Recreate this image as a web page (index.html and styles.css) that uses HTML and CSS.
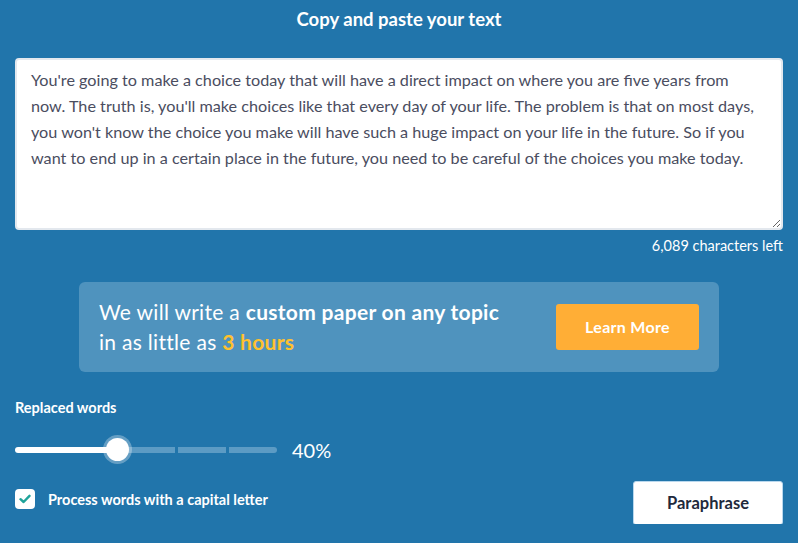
FILE: index.html
```html
<!DOCTYPE html>
<html lang="en">

<head>
    <meta charset="UTF-8">
    <title>Paraphrasing tool</title>
    <link rel="stylesheet" href="styles.css">
</head>

<body>
    <div id="tool">
        <h2 class="title">Copy and paste your text</h2>
        <textarea class="input">You're going to make a choice today that will have a direct impact on where you are five years from
now. The truth is, you'll make choices like that every day of your life. The problem is that on most days,
you won't know the choice you make will have such a huge impact on your life in the future. So if you
want to end up in a certain place in the future, you need to be careful of the choices you make today.</textarea>
        <div class="counter">6,089 characters left</div>

        <div class="promo">
            <p class="promo_text">We will write a <b>custom paper on any topic</b><br>in as little as <b class="accent">3 hours</b></p>
            <a class="promo_btn">Learn More</a>
        </div>

        <div class="options">
            <div class="opt_left">
                <div class="label">Replaced words</div>
                <div class="slider_row">
                    <div class="slider">
                        <span class="fill"></span>
                        <span class="knob"></span>
                        <span class="seg seg1"></span>
                        <span class="seg"></span>
                        <span class="seg"></span>
                    </div>
                    <span class="percent">40%</span>
                </div>
                <label class="check">
                    <span class="box">
                        <svg width="12" height="10" viewBox="0 0 12 10"><path d="M1.5 5.2 L4.6 8 L10.5 1.8" fill="none" stroke="#1fa39a" stroke-width="2.4" stroke-linecap="round" stroke-linejoin="round"/></svg>
                    </span>
                    Process words with a capital letter
                </label>
            </div>
            <a class="go_btn">Paraphrase</a>
        </div>
    </div>
</body>

</html>
```

FILE: styles.css
```css
* {
    margin: 0;
    padding: 0;
    box-sizing: border-box;
}

body {
    background-color: #2175AB;
    font-family: Lato, "Open Sans", sans-serif;
    color: #fff;
}

#tool {
    padding: 7px 15px 0;
}

.title {
    text-align: center;
    font-size: 18.5px;
    font-weight: 700;
    line-height: 24px;
    height: 51px;
}

.input {
    display: block;
    width: 768px;
    height: 172px;
    border: 2px solid #e3e8ee;
    border-radius: 4px;
    padding: 7px 6px 7px 14px;
    font-family: Lato, sans-serif;
    font-size: 16.2px;
    line-height: 26px;
    color: #4a4d60;
    background: #fff;
    resize: vertical;
    overflow: hidden;
}

.counter {
    text-align: right;
    font-size: 14.5px;
    line-height: 16px;
    margin-top: 8px;
}

.promo {
    display: flex;
    align-items: center;
    justify-content: space-between;
    width: 640px;
    height: 90px;
    margin: 28px auto 0;
    padding: 0 20px;
    background-color: #4F93BE;
    border-radius: 6px;
}

.promo_text {
    font-size: 21px;
    line-height: 30px;
    letter-spacing: 0.3px;
}

.promo_text b {
    font-weight: 700;
}

.promo_text .accent {
    color: #FFC12E;
}

.promo_btn {
    width: 143px;
    height: 46px;
    line-height: 46px;
    text-align: center;
    background-color: #FFAE36;
    border-radius: 3px;
    font-size: 16px;
    font-weight: 700;
    letter-spacing: 0.3px;
}

.options {
    display: flex;
    justify-content: space-between;
    align-items: flex-end;
    margin-top: 28px;
}

.label {
    font-size: 14.5px;
    font-weight: 700;
    line-height: 16px;
}

.slider_row {
    display: flex;
    align-items: center;
    margin-top: 24px;
    height: 20px;
}

.slider {
    position: relative;
    display: flex;
    gap: 3px;
    width: 262px;
    height: 6px;
}

.fill {
    width: 102px;
    height: 6px;
    background: #fff;
    border-radius: 3px;
}

.knob {
    position: absolute;
    left: 91px;
    top: -9px;
    width: 23px;
    height: 23px;
    border-radius: 50%;
    background: #fff;
    box-shadow: 0 0 0 3px rgba(255, 255, 255, 0.3);
}

.seg {
    flex: 1;
    height: 6px;
    background: #5c9bc4;
}

.seg1 {
    margin-left: 7px;
}

.seg:last-child {
    border-radius: 0 3px 3px 0;
}

.percent {
    margin-left: 15px;
    font-size: 20px;
}

.check {
    display: flex;
    align-items: center;
    gap: 13px;
    height: 50px;
    margin-top: 14px;
    font-size: 14.5px;
    font-weight: 700;
}

.box {
    display: flex;
    align-items: center;
    justify-content: center;
    width: 20px;
    height: 20px;
    border-radius: 4px;
    background: #fff;
}

.go_btn {
    width: 150px;
    height: 44px;
    line-height: 42px;
    text-align: center;
    background: #fff;
    border: 1px solid #b9d8ee;
    border-radius: 3px;
    color: #1f2a3c;
    font-size: 16.5px;
    font-weight: 700;
    margin-bottom: -1px;
}
```
